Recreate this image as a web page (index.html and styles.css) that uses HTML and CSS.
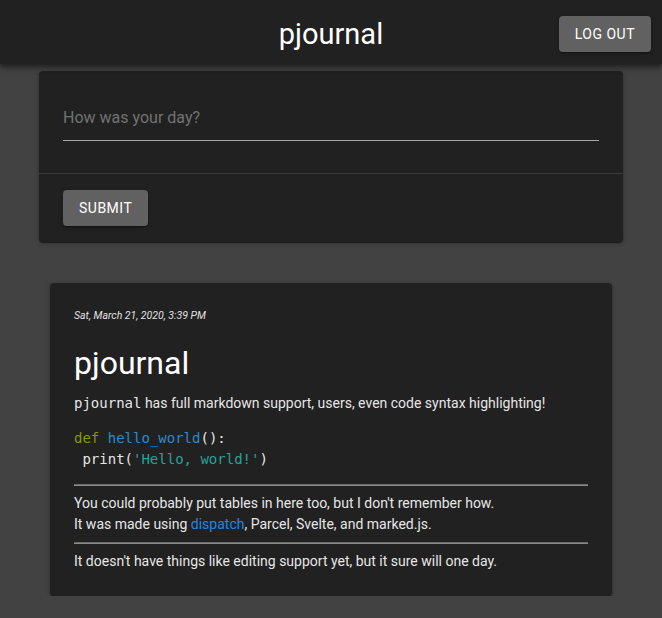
FILE: index.html
```html
<!DOCTYPE html>
<html lang="en">
<head>
<meta charset="utf-8">
<title>pjournal</title>
<link rel="stylesheet" href="styles.css">
</head>
<body>
<header class="topbar">
  <div class="topbar-spacer"></div>
  <h1 class="topbar-title">pjournal</h1>
  <div class="topbar-actions">
    <button class="btn" type="button">Log out</button>
  </div>
</header>
<main class="content">
  <form class="card composer">
    <div class="composer-body">
      <div class="field">
        <input class="field-input" type="text" placeholder="How was your day?">
      </div>
    </div>
    <div class="composer-actions">
      <button class="btn" type="button">Submit</button>
    </div>
  </form>

  <article class="card entry">
    <div class="entry-date">Sat, March 21, 2020, 3:39 PM</div>
    <h2 class="entry-title">pjournal</h2>
    <p class="entry-p"><code class="inline-code">pjournal</code> has full markdown support, users, even code syntax highlighting!</p>
<pre class="code"><span class="kw">def</span> <span class="fn">hello_world</span>():
 print(<span class="str">'Hello, world!'</span>)</pre>
    <hr class="rule">
    <p class="entry-p">You could probably put tables in here too, but I don't remember how.<br>It was made using <a class="link" href="#">dispatch</a>, Parcel, Svelte, and marked.js.</p>
    <hr class="rule">
    <p class="entry-p">It doesn't have things like editing support yet, but it sure will one day.</p>
  </article>
</main>
</body>
</html>
```

FILE: styles.css
```css
* { box-sizing: border-box; }

html, body {
  margin: 0;
  padding: 0;
  background: #424242;
  color: #e6e6e6;
  font-family: Roboto, "Liberation Sans", sans-serif;
}

.topbar {
  height: 64px;
  background: #212121;
  display: grid;
  grid-template-columns: 1fr auto 1fr;
  align-items: center;
  padding: 0 11px;
  box-shadow: 0 2px 4px -1px rgba(0,0,0,.35), 0 4px 5px 0 rgba(0,0,0,.25), 0 1px 10px 0 rgba(0,0,0,.2);
  position: relative;
  z-index: 2;
}

.topbar-title {
  margin: 0;
  font-size: 29px;
  font-weight: 400;
  color: #fff;
  line-height: 1;
  padding-top: 4px;
}

.topbar-actions {
  display: flex;
  justify-content: flex-end;
  padding-top: 4px;
}

.btn {
  height: 36px;
  padding: 0 16px;
  border: 0;
  border-radius: 4px;
  background: #616161;
  color: #fff;
  font-family: Roboto, "Liberation Sans", sans-serif;
  font-size: 14px;
  font-weight: 400;
  letter-spacing: 0.5px;
  text-transform: uppercase;
  box-shadow: 0 3px 1px -2px rgba(0,0,0,.2), 0 2px 2px 0 rgba(0,0,0,.14), 0 1px 5px 0 rgba(0,0,0,.12);
}

.content {
  display: flex;
  flex-direction: column;
  align-items: center;
  padding-top: 7px;
}

.card {
  background: #212121;
  border-radius: 4px;
  box-shadow: 0 2px 1px -1px rgba(0,0,0,.3), 0 1px 1px 0 rgba(0,0,0,.24), 0 1px 4px 0 rgba(0,0,0,.3);
}

.composer {
  width: 584px;
  margin: 0;
}

.composer-body {
  padding: 24px 24px 32px;
  border-bottom: 1px solid #383838;
}

.field {
  height: 46px;
  border-bottom: 1px solid #a8a8a8;
  display: flex;
  align-items: flex-end;
}

.field-input {
  width: 100%;
  border: 0;
  outline: 0;
  background: transparent;
  color: #e6e6e6;
  font-family: Roboto, "Liberation Sans", sans-serif;
  font-size: 16px;
  padding: 0 0 13px;
}

.field-input::placeholder {
  color: #727272;
}

.composer-actions {
  padding: 16px 24px;
  display: flex;
}

.entry {
  width: 562px;
  margin-top: 41px;
  padding: 24px;
  font-size: 14px;
  line-height: 21px;
}

.entry-date {
  font-size: 10.5px;
  font-style: italic;
  line-height: 17px;
  color: #e0e0e0;
}

.entry-title {
  margin: 20px 0 11px;
  font-size: 32px;
  font-weight: 400;
  line-height: 38px;
  color: #fff;
}

.entry-p {
  margin: 0;
}

.inline-code,
.code {
  font-family: "DejaVu Sans Mono", monospace;
  font-size: 14px;
}

.code {
  margin: 14px 0;
  line-height: 21px;
  color: #e6e6e6;
}

.kw { color: #859900; }
.fn { color: #268bd2; }
.str { color: #2aa198; }

.rule {
  margin: 7px 0;
  border: 0;
  border-top: 1px solid #6a6a6a;
  border-bottom: 1px solid #8a8a8a;
  height: 0;
}

.link {
  color: #1e88e5;
  text-decoration: none;
}
```
